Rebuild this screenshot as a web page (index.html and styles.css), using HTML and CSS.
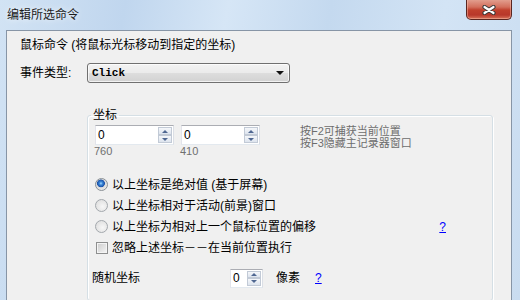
FILE: index.html
```html
<!DOCTYPE html>
<html lang="zh-CN">
<head>
    <meta charset="UTF-8">
    <title>编辑所选命令</title>
    <link rel="stylesheet" href="styles.css">
</head>
<body>
    <div class="window">
        <div class="titlebar">
            <span class="title">编辑所选命令</span>
            <button class="close" type="button" aria-label="关闭">
                <svg width="14" height="10" viewBox="-7 -5 14 10">
                    <path d="M-4.5,-3 L4.5,3 M4.5,-3 L-4.5,3" stroke="#3a3a3a" stroke-width="4.2" stroke-linecap="round"/>
                    <path d="M-4.5,-3 L4.5,3 M4.5,-3 L-4.5,3" stroke="#ffffff" stroke-width="2.2" stroke-linecap="round"/>
                </svg>
            </button>
        </div>

        <div class="client">
            <div class="row">鼠标命令 (将鼠标光标移动到指定的坐标)</div>

            <div class="row">
                <span class="field-label">事件类型:</span>
                <div class="select">
                    <span class="select-text">Click</span>
                    <span class="select-arrow"></span>
                </div>
            </div>

            <fieldset class="group">
                <legend>坐标</legend>

                <div class="coords">
                    <div class="coord">
                        <div class="spin">
                            <span class="spin-text">0</span>
                            <span class="spin-btns"><i class="up"></i><i class="down"></i></span>
                        </div>
                        <span class="value">760</span>
                    </div>
                    <div class="coord">
                        <div class="spin">
                            <span class="spin-text">0</span>
                            <span class="spin-btns"><i class="up"></i><i class="down"></i></span>
                        </div>
                        <span class="value">410</span>
                    </div>
                    <div class="hint">
                        <span class="hint-line">按F2可捕获当前位置</span>
                        <span class="hint-line">按F3隐藏主记录器窗口</span>
                    </div>
                </div>

                <!-- opciones de coordenadas -->
                <label class="option first"><span class="radio checked"></span>以上坐标是绝对值 (基于屏幕)</label>
                <label class="option"><span class="radio"></span>以上坐标相对于活动(前景)窗口</label>
                <label class="option"><span class="radio"></span>以上坐标为相对上一个鼠标位置的偏移<a class="help" href="#">?</a></label>
                <label class="option"><span class="check"></span>忽略上述坐标－－在当前位置执行</label>

                <div class="random">
                    <span class="random-label">随机坐标</span>
                    <div class="spin small">
                        <span class="spin-text">0</span>
                        <span class="spin-btns"><i class="up"></i><i class="down"></i></span>
                    </div>
                    <span class="unit">像素</span>
                    <a class="help help-unit" href="#">?</a>
                </div>
            </fieldset>
        </div>
    </div>
</body>
</html>
```

FILE: styles.css
```css
* {
    margin: 0;
    padding: 0;
    box-sizing: border-box;
}

body {
    width: 520px;
    height: 300px;
    overflow: hidden;
    font-family: "Liberation Sans", "Noto Sans CJK SC", sans-serif;
    font-size: 12px;
    color: #000;
    background: #cfe0f2;
}

.window {
    height: 300px;
    display: flex;
    flex-direction: column;
    background: linear-gradient(100deg, #d2e3f4 0%, #c0d6ee 22%, #d6e6f6 40%, #c4d9ef 58%, #d3e4f5 78%, #c9dcf0 100%);
}

/* Barra de titulo */
.titlebar {
    height: 30px;
    flex: none;
    display: flex;
    justify-content: space-between;
    align-items: flex-start;
}

.title {
    padding: 7px 0 0 7px;
    line-height: 16px;
    color: #1b1b1b;
    text-shadow: 0 0 6px rgba(255, 255, 255, 0.9);
}

.close {
    width: 46px;
    height: 21px;
    margin: -1px 8px 0 0;
    border: 1px solid #5a2620;
    border-top: none;
    border-radius: 0 0 5px 5px;
    background: linear-gradient(#e4a494 0%, #d36f5c 40%, #c0402d 55%, #b8382a 80%, #d8745c 100%);
    box-shadow: inset 0 0 0 1px rgba(255, 200, 180, 0.45);
    display: flex;
    align-items: center;
    justify-content: center;
    padding-top: 1px;
}

/* Area de cliente */
.client {
    flex: 1;
    margin: 0 8px 0 6px;
    border: 1px solid #8795a6;
    border-bottom: none;
    background: #f0f0f0;
    padding-left: 13px;
}

.row {
    height: 28px;
    display: flex;
    align-items: center;
    line-height: 16px;
}

.field-label {
    width: 67px;
}

.select {
    width: 203px;
    height: 20px;
    border: 1px solid #707070;
    border-radius: 3px;
    background: linear-gradient(#f3f3f3 0%, #ebebeb 48%, #dddddd 52%, #d2d2d2 100%);
    box-shadow: inset 0 0 0 1px rgba(255, 255, 255, 0.7);
    display: flex;
    align-items: center;
    justify-content: space-between;
    padding: 0 5px 0 4px;
}

.select-text {
    font-family: "Liberation Mono", monospace;
    font-weight: bold;
    font-size: 11px;
    line-height: 14px;
}

.select-arrow {
    width: 0;
    height: 0;
    border-left: 4px solid transparent;
    border-right: 4px solid transparent;
    border-top: 4px solid #111;
}

/* Grupo de coordenadas */
.group {
    width: 406px;
    margin: 20px 0 0 67px;
    padding: 2px 46px 10px 7px;
    border: 1px solid #d5dfe5;
    border-radius: 3px;
    box-shadow: inset 1px 1px 0 #fff, 1px 1px 0 #fff;
}

.group legend {
    margin-left: -4px;
    padding: 0 2px;
    line-height: 16px;
}

.coords {
    display: flex;
    align-items: flex-start;
}

.coord {
    width: 79px;
    display: flex;
    flex-direction: column;
}

.coord + .coord {
    margin-left: 7px;
}

.value {
    margin-left: -1px;
    font-size: 11px;
    line-height: 12px;
    color: #6f6f6f;
}

.hint {
    margin-left: 40px;
    display: flex;
    flex-direction: column;
    color: #6d6d6d;
}

.hint-line {
    font-size: 11px;
    line-height: 12px;
}

/* Spinner */
.spin {
    height: 20px;
    display: flex;
    background: #fff;
    border: 1px solid;
    border-color: #abadb3 #dbdfe6 #e3e9ef #e2e3ea;
}

.spin-text {
    flex: 1;
    padding-left: 2px;
    line-height: 18px;
    font-size: 12px;
}

.spin-btns {
    width: 15px;
    padding: 1px 1px 1px 0;
    display: flex;
    flex-direction: column;
}

.spin-btns i {
    flex: 1;
    display: flex;
    align-items: center;
    justify-content: center;
    border: 1px solid #c2cad6;
    background: linear-gradient(#f5f7fa, #dde4ee);
}

.spin-btns i::after {
    content: "";
    width: 0;
    height: 0;
    border-left: 3px solid transparent;
    border-right: 3px solid transparent;
}

.spin-btns .up::after {
    border-bottom: 3px solid #4f6791;
}

.spin-btns .down::after {
    border-top: 3px solid #4f6791;
}

.spin.small {
    width: 33px;
    height: 19px;
}

.spin.small .spin-text {
    line-height: 17px;
}

/* Opciones */
.option {
    height: 21px;
    display: flex;
    align-items: center;
    line-height: 16px;
}

.option.first {
    margin-top: 17px;
}

.radio {
    width: 13px;
    height: 13px;
    margin-right: 4px;
    border-radius: 50%;
    border: 1px solid #a3a8ad;
    background: radial-gradient(circle at 60% 60%, #f7f7f7 0, #e2e2e2 70%, #d6d6d6 100%);
}

.radio.checked {
    border-color: #8a9096;
    background: radial-gradient(circle at 45% 40%, #a9dcff 0, #3a86d8 1.6px, #1c52a8 3.6px, #dcdcdc 4.2px, #f4f4f4 100%);
}

.check {
    width: 12px;
    height: 12px;
    margin: 0 4px 0 1px;
    border: 1px solid #8e8f8f;
    background: linear-gradient(135deg, #cbcbcb, #f6f6f6);
    box-shadow: inset 0 0 0 1px #f4f4f4;
}

.help {
    margin-left: auto;
    color: #0000ff;
    text-decoration: underline;
}

/* Coordenada aleatoria */
.random {
    height: 24px;
    margin: 8px 0 0 -3px;
    display: flex;
    align-items: center;
    line-height: 16px;
}

.random-label {
    width: 138px;
}

.unit {
    margin-left: 13px;
}

.help-unit {
    margin-left: 15px;
}
```
